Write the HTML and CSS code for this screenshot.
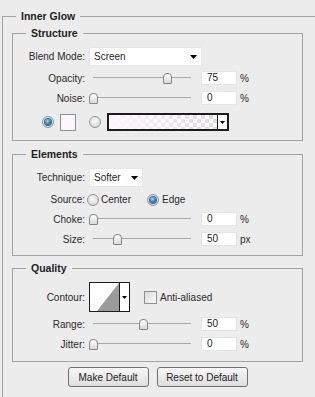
FILE: index.html
```html
<!DOCTYPE html>
<html>
<head>
<meta charset="utf-8">
<title>Inner Glow</title>
<link rel="stylesheet" href="styles.css">
</head>
<body>
<fieldset class="panel">
  <legend class="title title-outer">Inner Glow</legend>

  <fieldset class="group g-structure">
    <legend class="title title-inner">Structure</legend>
    <div class="row r-select">
      <span class="lbl">Blend Mode:</span>
      <div class="select s-blend"><span class="sel-text">Screen</span><svg class="arrow" width="7" height="4" viewBox="0 0 7 4"><path d="M0 0H7L3.5 4Z"/></svg></div>
    </div>
    <div class="row r-slider r-first">
      <span class="lbl">Opacity:</span>
      <div class="slider"><div class="thumb" style="left:74px"></div></div>
      <div class="num">75</div><span class="unit">%</span>
    </div>
    <div class="row r-slider">
      <span class="lbl">Noise:</span>
      <div class="slider"><div class="thumb" style="left:0px"></div></div>
      <div class="num">0</div><span class="unit">%</span>
    </div>
    <div class="row r-color">
      <span class="radio on"></span>
      <span class="swatch"></span>
      <span class="radio r2"></span>
      <div class="gradient"><span class="grad-preview"></span><span class="grad-arrow"><svg class="arrow" width="5" height="3" viewBox="0 0 5 3"><path d="M0 0H5L2.5 3Z"/></svg></span></div>
    </div>
  </fieldset>

  <fieldset class="group g-elements">
    <legend class="title title-inner">Elements</legend>
    <div class="row r-select">
      <span class="lbl">Technique:</span>
      <div class="select s-tech"><span class="sel-text">Softer</span><svg class="arrow" width="7" height="4" viewBox="0 0 7 4"><path d="M0 0H7L3.5 4Z"/></svg></div>
    </div>
    <div class="row r-source">
      <span class="lbl">Source:</span>
      <span class="radio r-center"></span><span class="opt">Center</span>
      <span class="radio on r-edge"></span><span class="opt">Edge</span>
    </div>
    <div class="row r-slider">
      <span class="lbl">Choke:</span>
      <div class="slider"><div class="thumb" style="left:0px"></div></div>
      <div class="num">0</div><span class="unit">%</span>
    </div>
    <div class="row r-slider">
      <span class="lbl">Size:</span>
      <div class="slider"><div class="thumb" style="left:24px"></div></div>
      <div class="num">50</div><span class="unit">px</span>
    </div>
  </fieldset>

  <fieldset class="group g-quality">
    <legend class="title title-inner">Quality</legend>
    <div class="row r-contour">
      <span class="lbl">Contour:</span>
      <div class="contour">
        <svg class="contour-preview" width="29" height="28" viewBox="0 0 29 28"><rect width="29" height="28" fill="#fff"/><path d="M7 28L29 0V28Z" fill="#9b9b9b"/></svg>
        <span class="contour-arrow"><svg class="arrow" width="5" height="3" viewBox="0 0 5 3"><path d="M0 0H5L2.5 3Z"/></svg></span>
      </div>
      <span class="check"></span><span class="opt">Anti-aliased</span>
    </div>
    <div class="row r-slider r-first">
      <span class="lbl">Range:</span>
      <div class="slider"><div class="thumb" style="left:50px"></div></div>
      <div class="num">50</div><span class="unit">%</span>
    </div>
    <div class="row r-slider">
      <span class="lbl">Jitter:</span>
      <div class="slider"><div class="thumb" style="left:0px"></div></div>
      <div class="num">0</div><span class="unit">%</span>
    </div>
  </fieldset>

  <div class="buttons">
    <button class="btn b-make">Make Default</button>
    <button class="btn b-reset">Reset to Default</button>
  </div>
</fieldset>
</body>
</html>
```

FILE: styles.css
```css
* { box-sizing: border-box; }
html, body { margin: 0; padding: 0; }
body {
  background: #ececec;
  font-family: "Liberation Sans", Arial, sans-serif;
  font-size: 10px;
  color: #2a2a2a;
  height: 397px;
  overflow: hidden;
}

.panel {
  margin: 10px 0 0 2px;
  padding: 4px 12px 10px 9px;
  border: 1px solid #a2a2a2;
  border-right: 0;
  border-bottom: 0;
  min-width: 0;
}

.title {
  font-size: 10.5px;
  font-weight: bold;
  line-height: 13px;
  height: 13px;
  padding: 0 5px;
  color: #1e1e1e;
}
.title-outer { margin-left: 4px; }
.title-inner { margin-left: 13px; }

.group {
  margin: 0;
  padding: 7px 0 0 0;
  border: 1px solid #a2a2a2;
  min-width: 0;
}
.g-structure { padding-bottom: 9px; }
.g-elements { margin-top: 7px; padding-bottom: 6px; }
.g-quality { margin-top: 6px; padding-bottom: 7px; }

.row {
  display: flex;
  align-items: center;
  height: 20px;
  white-space: nowrap;
}
.r-select { height: 19px; }
.r-first { margin-top: 2px; }
.r-source { margin-top: 3px; height: 19px; }
.r-contour { height: 30px; }
.r-color { height: 18px; margin-top: 5px; padding-left: 29px; }

.lbl {
  flex: none;
  width: 72px;
  margin-right: 4px;
  text-align: right;
}

.select {
  height: 19px;
  background: #fff;
  border: 1px solid #e6e6e6;
  display: flex;
  align-items: center;
  justify-content: space-between;
  padding: 0 4px 0 4px;
}
.s-blend { width: 113px; }
.s-tech { width: 54px; }
.arrow { display: block; fill: #000; }

.slider {
  position: relative;
  flex: none;
  width: 108px;
  height: 20px;
  background: linear-gradient(#a9a9a9, #a9a9a9) 4px 9px / 98px 1px no-repeat;
}
.thumb {
  position: absolute;
  top: 5px;
  width: 9px;
  height: 11px;
  border: 1px solid #858585;
  border-radius: 4px 4px 1px 1px;
  background: linear-gradient(#ffffff, #d9d9d9);
}

.num {
  flex: none;
  width: 36px;
  height: 14px;
  margin-left: 4px;
  padding-left: 5px;
  line-height: 12px;
  background: #fff;
  border: 1px solid #e4e4e4;
  color: #222;
}
.unit { margin-left: 3px; }

.radio {
  flex: none;
  width: 12px;
  height: 12px;
  border-radius: 50%;
  border: 1px solid #959595;
  background: radial-gradient(circle at 45% 40%, #fbfbfb, #d4d4d4 80%);
  display: flex;
  align-items: center;
  justify-content: center;
}
.radio.on::after {
  content: "";
  width: 6px;
  height: 6px;
  border-radius: 50%;
  background: radial-gradient(circle at 40% 35%, #9fdcf5, #2a85b9 50%, #0f4a70 100%);
  box-shadow: 0 0 0 1px #3b6a8a;
}
.r2 { margin-left: 13px; }
.swatch {
  flex: none;
  width: 16px;
  height: 17px;
  margin-left: 6px;
  background: #fdf6fb;
  border: 1px solid #8e8e8e;
}
.gradient {
  flex: none;
  width: 122px;
  height: 18px;
  margin-left: 6px;
  border: 2px solid #1c1c1c;
  display: flex;
}
.grad-preview {
  flex: 1;
  background:
    linear-gradient(to right, #fdf5fb, rgba(253, 245, 251, 0.1)),
    repeating-conic-gradient(#d9d9d9 0 25%, #ffffff 0 50%) 0 0 / 8px 8px;
}
.grad-arrow {
  flex: none;
  width: 10px;
  border-left: 1px solid #1c1c1c;
  background: #fff;
  display: flex;
  align-items: center;
  justify-content: center;
}

.r-center { margin-left: -2px; }
.opt { margin-left: 2px; }
.r-edge { margin-left: 16px; }
.r-edge + .opt { margin-left: 3px; }

.contour {
  flex: none;
  width: 41px;
  height: 30px;
  border: 1px solid #1c1c1c;
  display: flex;
}
.contour-preview { display: block; flex: none; }
.contour-arrow {
  flex: 1;
  border-left: 1px solid #1c1c1c;
  background: #fff;
  display: flex;
  align-items: center;
  justify-content: center;
}
.check {
  flex: none;
  width: 13px;
  height: 13px;
  margin-left: 14px;
  border: 1px solid #929292;
  background: linear-gradient(135deg, #d8d8d8, #fbfbfb);
}
.check + .opt { margin-left: 3px; }

.buttons {
  display: flex;
  justify-content: center;
  gap: 8px;
  margin-top: 5px;
}
.btn {
  height: 20px;
  padding: 0;
  font-family: "Liberation Sans", Arial, sans-serif;
  font-size: 10px;
  color: #222;
  border: 1px solid #707070;
  border-radius: 3px;
  background: linear-gradient(#f7f7f7, #dedede);
}
.b-make { width: 81px; }
.b-reset { width: 91px; }
```
